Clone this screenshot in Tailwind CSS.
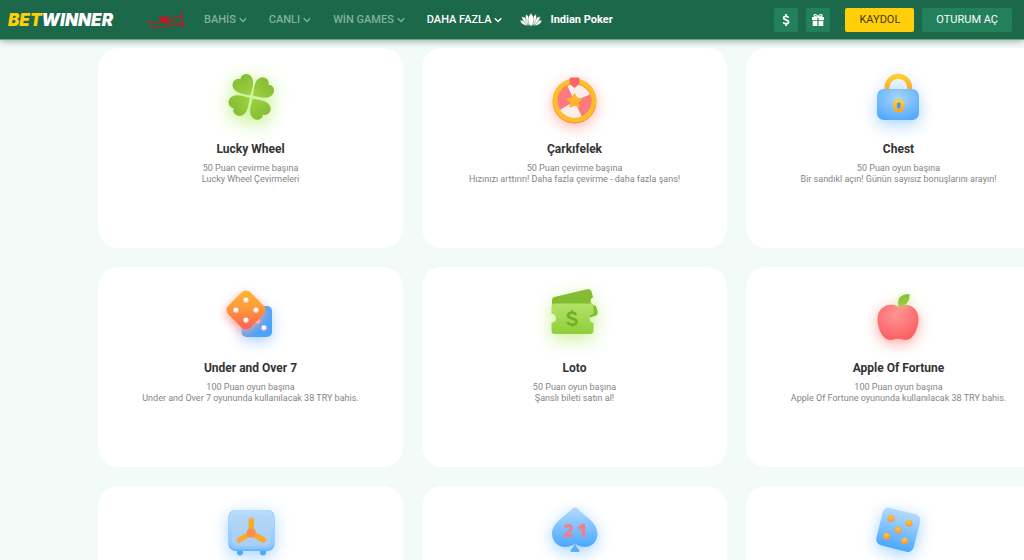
<!DOCTYPE html>
<html lang="tr">
<head>
<meta charset="utf-8">
<meta name="viewport" content="width=device-width, initial-scale=1">
<title>BetWinner</title>
<script src="https://cdn.jsdelivr.net/npm/@tailwindcss/browser@4"></script>
</head>
<body class="min-h-screen overflow-hidden bg-[#f2fbf8] font-['Roboto',sans-serif]">
<header class="relative z-10 flex h-10 items-center border-b border-[#6fa38f] bg-[#1c684b] pr-3 pl-2 shadow-[0_1px_7px_rgba(0,40,25,0.4)]">
  <a href="#" class="w-[140px] font-['Inter',sans-serif] text-[17px] leading-5 font-black whitespace-nowrap text-white italic"><span class="text-[#ffcf0a]">BET</span>WINNER</a>
  <nav class="flex items-center text-[11px] leading-4 font-medium whitespace-nowrap text-[#82b19f]">
    <a href="#" aria-label="Aviator" class="mr-5">
      <svg class="h-[18px] w-9" viewBox="0 0 36 18" fill="none" stroke="#d0121b" stroke-linecap="round" stroke-linejoin="round">
        <path d="M.5 10L2 15L8 16.500L20 15L34 13.500M.5 10L4 12.500L15 10.500" stroke-width="1"/>
        <path d="M10.500 6.500L16 6L23 10.500L19 12.500L11 10L14 8.500Z" fill="#d0121b" stroke-width=".6"/>
        <path d="M16 6L24 7L33 6M25 7.500L26 12L33 11.500" stroke-width=".9"/>
        <path d="M32.800 1L35.300 16.500" stroke-width="1.300"/>
      </svg>
    </a>
    <a href="#" class="mr-[22px] flex items-center gap-[3px]">BAHİS<svg class="size-2" viewBox="0 0 8 8" fill="none" stroke="currentColor" stroke-width="1.3"><path d="M.7 2.2L4 5.5L7.300 2.200"/></svg></a>
    <a href="#" class="mr-[22px] flex items-center gap-[3px]">CANLI<svg class="size-2" viewBox="0 0 8 8" fill="none" stroke="currentColor" stroke-width="1.3"><path d="M.7 2.2L4 5.5L7.300 2.200"/></svg></a>
    <a href="#" class="mr-[22px] flex items-center gap-[3px]">WİN GAMES<svg class="size-2" viewBox="0 0 8 8" fill="none" stroke="currentColor" stroke-width="1.3"><path d="M.7 2.2L4 5.5L7.300 2.200"/></svg></a>
    <a href="#" class="mr-[18px] flex items-center gap-[3px] text-white">DAHA FAZLA<svg class="size-2" viewBox="0 0 8 8" fill="none" stroke="currentColor" stroke-width="1.3"><path d="M.7 2.2L4 5.5L7.300 2.200"/></svg></a>
    <a href="#" class="flex items-center gap-2 font-bold text-white">
      <svg class="h-[14px] w-[22px]" viewBox="0 0 22 14" fill="#fff" stroke="#1c684b" stroke-width=".4">
        <path d="M0 7.500Q4 6.500 8 13Q1.500 12 0 7.500ZM22 7.500Q18 6.500 14 13Q20.500 12 22 7.500Z"/>
        <path d="M1.500 3.500Q8 4 9.500 13Q3 10 1.500 3.500ZM20.500 3.500Q14 4 12.500 13Q19 10 20.500 3.500Z"/>
        <path d="M6 1Q11.500 5 10.500 13Q4 9 6 1ZM16 1Q10.500 5 11.500 13Q18 9 16 1Z"/>
        <path d="M11 0Q17 7 11 13.500Q5 7 11 0Z"/>
      </svg>Indian Poker</a>
  </nav>
  <div class="ml-auto flex items-center text-[11px] leading-4 whitespace-nowrap">
    <button aria-label="Para yatır" class="mr-2 grid size-6 place-items-center rounded-xs bg-[#23805d] text-white">
      <svg class="h-3 w-2" viewBox="0 0 8 12" fill="none" stroke="currentColor" stroke-width="1.7"><path d="M6.600 3.700C6 2.200 1.600 1.700 1.600 4C1.600 6.200 6.600 5.500 6.600 8C6.600 10.300 2 10.200 1.200 8.200M4 0V2.500M4 9.500V12"/></svg>
    </button>
    <button aria-label="Bonuslar" class="mr-[15px] grid size-6 place-items-center rounded-xs bg-[#23805d] text-white">
      <svg class="size-3" viewBox="0 0 12 12"><path fill="currentColor" d="M0 3H5.400V6H0ZM6.600 3H12V6H6.600ZM.7 6.800H5.400V12H.7ZM6.600 6.800H11.300V12H6.600Z"/><path d="M6 3C4.500-.5 1.600.2 2 1.800C2.300 3 4.500 3 6 3C7.500 3 9.700 3 10 1.800C10.400.2 7.500-.5 6 3Z" fill="none" stroke="currentColor" stroke-width="1.100"/></svg>
    </button>
    <button class="mr-2 h-6 rounded-xs bg-[#ffcf0a] px-3.5 text-[#3f390c]">KAYDOL</button>
    <button class="h-6 rounded-xs bg-[#23805d] px-3.5 text-white">OTURUM AÇ</button>
  </div>
</header>

<svg class="absolute size-0" aria-hidden="true">
  <defs>
    <linearGradient id="green" x2="0" y2="1"><stop stop-color="#86bd35"/><stop offset="1" stop-color="#9ed13f"/></linearGradient>
    <linearGradient id="lime" x2="0" y2="1"><stop stop-color="#b3e267"/><stop offset="1" stop-color="#8fce3a"/></linearGradient>
    <linearGradient id="gold" x2="0" y2="1"><stop stop-color="#ffce2b"/><stop offset="1" stop-color="#f9a432"/></linearGradient>
    <linearGradient id="fire" x2="1" y2="1"><stop stop-color="#fdb92e"/><stop offset=".4" stop-color="#fda03a"/><stop offset="1" stop-color="#fb5a55"/></linearGradient>
    <radialGradient id="sky" cx=".5" cy=".3" r=".8"><stop stop-color="#a9d4fd"/><stop offset="1" stop-color="#4aa5fd"/></radialGradient>
    <linearGradient id="blue" x2="0" y2="1"><stop stop-color="#b5dafd"/><stop offset="1" stop-color="#4ba8fd"/></linearGradient>
    <linearGradient id="ice" x2="0" y2="1"><stop stop-color="#b9ddfd"/><stop offset="1" stop-color="#8cc5fc"/></linearGradient>
    <radialGradient id="red" cx=".45" cy=".3" r=".75"><stop stop-color="#ff9494"/><stop offset="1" stop-color="#fb5a5e"/></radialGradient>
    <radialGradient id="orb" cx=".5" cy=".3" r=".7"><stop stop-color="#ffc93a"/><stop offset="1" stop-color="#f99040"/></radialGradient>
    <radialGradient id="pearl" cx=".45" cy=".3" r=".8"><stop offset=".3" stop-color="#fff"/><stop offset="1" stop-color="#f3a9a4"/></radialGradient>
    <path id="leaf" d="M0-2C-3-5-10-10-10.600-15.500C-11.200-20-8-23.200-4.500-23.200C-2.500-23.200-1-22.500 0-21C1-22.500 2.500-23.200 4.500-23.200C8-23.200 11.200-20 10.600-15.500C10-10 3-5 0-2Z"/>
  </defs>
</svg>

<main class="mt-2 ml-[98px] grid min-w-[953px] auto-rows-[200px] grid-cols-3 gap-[19px] text-center text-[9px] leading-[11px] whitespace-nowrap text-[#858585]">
  <article class="rounded-[20px] bg-white">
    <svg class="mx-auto h-[93px] w-[100px] overflow-visible drop-shadow-[0_5px_9px_#bdf07a]" viewBox="0 0 100 93">
      <g fill="url(#green)"><use href="#leaf" transform="translate(50.500 49) rotate(-32)"/><use href="#leaf" transform="translate(50.500 49) rotate(54)"/><use href="#leaf" transform="translate(50.500 49) rotate(147)"/><use href="#leaf" transform="translate(50.500 49) rotate(238)"/></g>
    </svg>
    <h2 class="text-xs leading-4 font-bold text-[#333]">Lucky Wheel</h2>
    <p class="mt-1.5">50 Puan çevirme başına<br>Lucky Wheel Çevirmeleri</p>
  </article>
  <article class="rounded-[20px] bg-white">
    <svg class="mx-auto h-[93px] w-[100px] overflow-visible drop-shadow-[0_4px_7px_#ffb7ad]" viewBox="0 0 100 93">
      <circle cx="49.500" cy="53" r="18" fill="#fdeeeb"/>
      <path d="M49.500 53L42 37A18 18 0 0 0 35 62ZM49.500 53L66 46A18 18 0 0 1 57 69Z" fill="#fb7a7d"/>
      <circle cx="49.500" cy="53.500" r="19.500" fill="none" stroke="#f59a35" stroke-width="5"/>
      <circle cx="49.500" cy="52.500" r="19.500" fill="none" stroke="#fdbd2c" stroke-width="4.500"/>
      <path d="M49.500 46.500L51.500 50.500L56 51L52.700 54L53.600 58.500L49.500 56.300L45.400 58.500L46.300 54L43 51L47.500 50.500Z" fill="url(#gold)" stroke="#fdb52e" stroke-width="2" stroke-linejoin="round"/>
      <path d="M44.500 31Q44.500 29.500 46 29.500H53Q54.500 29.500 54.500 31V34Q54.500 36 49.500 40Q44.500 36 44.500 34Z" fill="#f86468"/>
    </svg>
    <h2 class="text-xs leading-4 font-bold text-[#333]">Çarkıfelek</h2>
    <p class="mt-1.5">50 Puan çevirme başına<br>Hızınızı arttırın! Daha fazla çevirme - daha fazla şans!</p>
  </article>
  <article class="rounded-[20px] bg-white">
    <svg class="mx-auto h-[93px] w-[100px] overflow-visible drop-shadow-[0_5px_8px_#a9d6ff]" viewBox="0 0 100 93">
      <path d="M38 43V39.500A11.300 11.300 0 0 1 60.600 39.500V43" fill="none" stroke="url(#gold)" stroke-width="5"/>
      <rect x="28" y="41" width="42" height="31" rx="7" fill="url(#sky)"/>
      <rect x="46" y="53" width="7.500" height="9.500" rx="2.500" fill="#77b5ee" stroke="url(#gold)" stroke-width="3.500"/>
      <path d="M49.700 54.500a2 2 0 0 1 1 3.500l.4 2h-2.800l.4-2a2 2 0 0 1 1-3.500Z" fill="#4797e0"/>
    </svg>
    <h2 class="text-xs leading-4 font-bold text-[#333]">Chest</h2>
    <p class="mt-1.5">50 Puan oyun başına<br>Bir sandıkl açın! Günün sayısız bonuşlarını arayın!</p>
  </article>
  <article class="rounded-[20px] bg-white">
    <svg class="mx-auto h-[93px] w-[100px] overflow-visible" viewBox="0 0 100 93">
      <g class="drop-shadow-[0_4px_7px_#a9d2ff]"><rect x="40.500" y="39" width="30.500" height="31" rx="5" fill="#4ca4fd"/><circle cx="56.800" cy="54.300" r="2.500" fill="#eeb1c8"/><circle cx="63" cy="61" r="2.700" fill="url(#pearl)"/></g>
      <g class="drop-shadow-[-1px_3px_5px_#ffa39a]"><rect x="29.500" y="27.500" width="31" height="31" rx="6" transform="rotate(45 45 43)" fill="url(#fire)"/></g>
      <g fill="url(#pearl)"><circle cx="45" cy="33.300" r="2.700"/><circle cx="35" cy="43.300" r="2.700"/><circle cx="55" cy="43.300" r="2.700"/><circle cx="45" cy="53.300" r="2.700"/></g>
    </svg>
    <h2 class="text-xs leading-4 font-bold text-[#333]">Under and Over 7</h2>
    <p class="mt-1.5">100 Puan oyun başına<br>Under and Over 7 oyununda kullanılacak 38 TRY bahis.</p>
  </article>
  <article class="rounded-[20px] bg-white">
    <svg class="mx-auto h-[93px] w-[100px] overflow-visible drop-shadow-[0_5px_9px_#c8f291]" viewBox="0 0 100 93">
      <path d="M27 40V33Q27 30.500 29.500 30L62 22.300Q65.500 21.500 66.500 24.500L68 30Q64.500 32.500 66 36Q68 38.500 71 39L72.500 44Q73.500 48 70 49L60 52Z" fill="#83bd31"/>
      <path d="M30 36.500H65Q68.500 36.500 68.500 40V46.500Q64.500 47.500 64.500 51.500Q64.500 55 68.500 56V63.500Q68.500 67 65 67H30Q26.500 67 26.500 63.500V56Q31 55 31 51.500Q31 47.500 26.500 46.500V40Q26.500 36.500 30 36.500Z" fill="url(#lime)"/>
      <path d="M51 48C50 44.800 43 45 43 48.500C43 52.300 51.500 50.500 51.500 54.700C51.500 58.500 43.500 58.500 42.500 55M47.200 43.500V46M47.200 57V59.500" fill="none" stroke="#73ad2b" stroke-width="2.600"/>
    </svg>
    <h2 class="text-xs leading-4 font-bold text-[#333]">Loto</h2>
    <p class="mt-1.5">50 Puan oyun başına<br>Şanslı bileti satın al!</p>
  </article>
  <article class="rounded-[20px] bg-white">
    <svg class="mx-auto h-[93px] w-[100px] overflow-visible" viewBox="0 0 100 93">
      <path class="drop-shadow-[0_4px_7px_#ffaaa6]" d="M49 39.500C52 38 55 37.500 58 38C65.500 39 69.500 45 69.500 52C69.500 62 64 73 56.500 73C53.500 73 52 71.800 49 71.800C46 71.800 44.500 73 41.500 73C34 73 28.500 62 28.500 52C28.500 45 32.500 39 40 38C43 37.500 46 38 49 39.500Z" fill="url(#red)"/>
      <path class="drop-shadow-[0_1px_5px_#c8f291]" d="M49.500 39C47.500 31.500 52 27 60.500 27C61 35 56.500 39.500 49.500 39Z" fill="url(#green)"/>
    </svg>
    <h2 class="text-xs leading-4 font-bold text-[#333]">Apple Of Fortune</h2>
    <p class="mt-1.5">100 Puan oyun başına<br>Apple Of Fortune oyununda kullanılacak 38 TRY bahis.</p>
  </article>
  <article class="rounded-[20px] bg-white">
    <svg class="mx-auto h-[93px] w-[100px] overflow-visible drop-shadow-[0_4px_8px_#a5d3ff]" viewBox="0 0 100 93">
      <path d="M36 62H42V66.500A3 3 0 0 1 36 66.500ZM59 62H65V66.500A3 3 0 0 1 59 66.500Z" fill="#4fa9fb"/>
      <rect x="27.500" y="24" width="46" height="41" rx="7" fill="#6db7fc"/>
      <rect x="28" y="24" width="45" height="39" rx="7" fill="url(#ice)"/>
      <rect x="31" y="29" width="39" height="31" rx="5" fill="#b5d3f1" opacity=".6"/>
      <path d="M50.300 34.500V47L38.500 54M50.300 47L62.500 54" fill="none" stroke="#fba92f" stroke-width="5.500" stroke-linecap="round"/>
      <circle cx="50.300" cy="47" r="4.800" fill="#fb9048"/>
    </svg>
  </article>
  <article class="rounded-[20px] bg-white">
    <svg class="mx-auto h-[93px] w-[100px] overflow-visible drop-shadow-[0_4px_8px_#a5d3ff]" viewBox="0 0 100 93">
      <path d="M50 57Q51 61 54 63.500Q55.500 66 53 66H47Q44.500 66 46 63.500Q49 61 50 57Z" fill="#58aef9"/>
      <path d="M48 22Q50 20.500 52 22C58 29 72.500 36 72.500 48C72.500 55 67 61 60 61C56 61 52.500 59.500 50 57.500C47.500 59.500 44 61 40 61C33 61 27 55 27 48C27 36 42 29 48 22Z" fill="url(#blue)"/>
      <text x="43.500 57" y="51" text-anchor="middle" class="font-['Open_Sans',sans-serif] text-[18px] font-extrabold" fill="#f77b86">21</text>
    </svg>
  </article>
  <article class="rounded-[20px] bg-white">
    <svg class="mx-auto h-[93px] w-[100px] overflow-visible drop-shadow-[0_4px_8px_#a5d3ff]" viewBox="0 0 100 93">
      <rect x="30" y="24.500" width="38.500" height="38.500" rx="6" transform="rotate(14 49 43.700)" fill="url(#blue)"/>
      <g fill="url(#orb)"><circle cx="42" cy="32.500" r="3.500"/><circle cx="60" cy="37.300" r="3.500"/><circle cx="49" cy="44" r="3.500"/><circle cx="37.500" cy="50.300" r="3.500"/><circle cx="55.500" cy="55" r="3.500"/></g>
    </svg>
  </article>
</main>
</body>
</html>
